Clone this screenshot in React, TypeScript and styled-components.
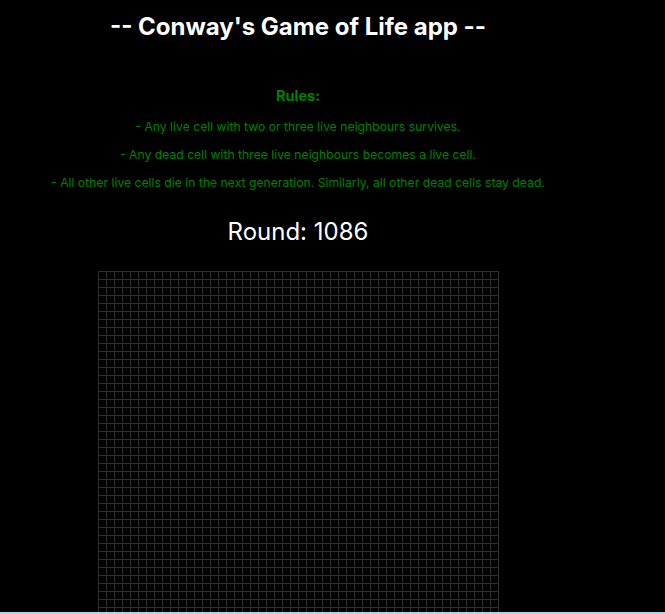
import React from 'react';
import styled, { createGlobalStyle } from 'styled-components';

const COLS = 50;
const ROWS = 50;

const GlobalStyle = createGlobalStyle`
  html, body {
    margin: 0;
    padding: 0;
    background-color: #000;
  }
  body {
    font-family: Inter, "Noto Sans", "DejaVu Sans", sans-serif;
    color: #fff;
  }
`;

const Page = styled.div`
  width: 596px;
  display: flex;
  flex-direction: column;
  align-items: center;
  padding-top: 12px;
`;

const Title = styled.h1`
  margin: 0;
  font-size: 24px;
  line-height: 30px;
  font-weight: 700;
  color: #fff;
`;

const Rules = styled.div`
  margin-top: 46px;
  display: flex;
  flex-direction: column;
  align-items: center;
  gap: 12px;
  color: #008000;
`;

const RulesHeading = styled.h3`
  margin: 0 0 3px;
  font-size: 14.5px;
  line-height: 16px;
  font-weight: 700;
`;

const Rule = styled.p`
  margin: 0;
  font-size: 12.2px;
  line-height: 16px;
  font-weight: 400;
`;

const Round = styled.h2`
  margin: 26px 0 0;
  font-size: 24px;
  line-height: 30px;
  font-weight: 400;
  color: #fff;
`;

const Board = styled.div`
  margin-top: 24px;
  display: grid;
  grid-template-columns: repeat(${COLS}, 7px);
  grid-auto-rows: 7px;
  gap: 1px;
  padding: 1px;
  background-color: #2f2f2f;
`;

const Cell = styled.div<{ $alive: boolean }>`
  background-color: ${(p) => (p.$alive ? '#00b000' : '#000')};
`;

const BottomEdge = styled.div`
  position: fixed;
  left: 0;
  right: 0;
  bottom: 0;
  height: 2px;
  background-color: #a6d8e8;
`;

const cells = Array.from({ length: ROWS * COLS }, (_, i) => i);

export default function App() {
  return (
    <>
      <GlobalStyle />
      <Page>
        <Title>-- Conway's Game of Life app --</Title>
        <Rules>
          <RulesHeading>Rules:</RulesHeading>
          <Rule>- Any live cell with two or three live neighbours survives.</Rule>
          <Rule>- Any dead cell with three live neighbours becomes a live cell.</Rule>
          <Rule>- All other live cells die in the next generation. Similarly, all other dead cells stay dead.</Rule>
        </Rules>
        <Round>Round: 1086</Round>
        <Board>
          {cells.map((i) => (
            <Cell key={i} $alive={false} />
          ))}
        </Board>
      </Page>
      <BottomEdge />
    </>
  );
}
